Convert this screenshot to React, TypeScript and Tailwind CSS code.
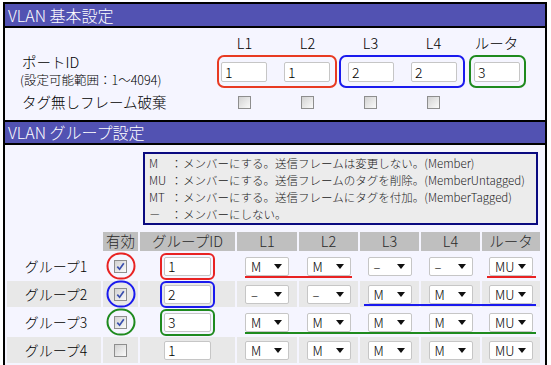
import React from "react";

const Check = ({ checked }: { checked?: boolean }) => (
  <div className="relative h-[13px] w-[13px] border border-[#8e8e8e] bg-[linear-gradient(135deg,#d2d2d2,#fafafa)]">
    {checked && (
      <svg className="absolute left-[1px] top-[1px]" width="9" height="9" viewBox="0 0 9 9">
        <path d="M1.3 4.6 L3.6 7.2 L7.8 1.2" stroke="#3a4fae" strokeWidth="1.7" fill="none" />
      </svg>
    )}
  </div>
);

const Inp = ({ v, w = 46, h = 20 }: { v: string; w?: number; h?: number }) => (
  <div
    className="flex items-center rounded-[2px] border border-[#c6c6c6] bg-white pl-[3px] text-[14px] leading-none text-black"
    style={{ width: w, height: h }}
  >
    {v}
  </div>
);

const Sel = ({ v }: { v: string }) => (
  <div className="flex h-[19px] w-[44px] items-center justify-between rounded-[2px] border border-[#c6c6c6] bg-white pl-[5px] pr-[6px] text-[13px] leading-none text-black">
    <span>{v}</span>
    <svg width="8" height="5" viewBox="0 0 8 5">
      <path d="M0 0h8L4 5z" fill="#111" />
    </svg>
  </div>
);

const legend: [string, string][] = [
  ["M", "メンバーにする。送信フレームは変更しない。(Member)"],
  ["MU", "メンバーにする。送信フレームのタグを削除。(MemberUntagged)"],
  ["MT", "メンバーにする。送信フレームにタグを付加。(MemberTagged)"],
  ["－", "メンバーにしない。"],
];

type Row = {
  label: string;
  checked: boolean;
  gid: string;
  vals: string[];
  color?: string;
  gray: boolean;
};

const rows: Row[] = [
  { label: "グループ1", checked: true, gid: "1", vals: ["M", "M", "–", "–", "MU"], color: "border-[#e82222]", gray: false },
  { label: "グループ2", checked: true, gid: "2", vals: ["–", "–", "M", "M", "MU"], color: "border-[#1a1aee]", gray: true },
  { label: "グループ3", checked: true, gid: "3", vals: ["M", "M", "M", "M", "MU"], color: "border-[#1e8a1e]", gray: false },
  { label: "グループ4", checked: false, gid: "1", vals: ["M", "M", "M", "M", "MU"], gray: true },
];

export default function App() {
  return (
    <div className="min-h-screen bg-white pl-[3px] pt-[2px] font-['Noto_Sans_CJK_JP','Noto_Sans',sans-serif] font-light text-black">
      <div className="w-[544px] border-x-2 border-t-2 border-black">
        {/* Section 1 title */}
        <div className="h-[24px] border-b-2 border-black bg-[#5252b2] pl-[3px] text-[16px] leading-[22px] text-white">
          VLAN 基本設定
        </div>
        {/* Section 1 content */}
        <div className="bg-[#f5f5ff] pb-[10px] pt-[7px]">
          <div className="flex h-[16px] items-center text-[14.5px] leading-none">
            <div className="w-[208px]" />
            {["L1", "L2", "L3", "L4", "ルータ"].map((h) => (
              <div key={h} className="w-[63px] text-center">
                {h}
              </div>
            ))}
          </div>
          <div className="mt-[4px] flex">
            <div className="w-[212px]">
              <div className="pl-[17px] text-[14.5px] leading-[13px]">ポートID</div>
              <div className="mt-[4px] pl-[15px] text-[12.5px] leading-[15px]">(設定可能範囲：1〜4094)</div>
            </div>
            <div className="flex h-[33px] w-[120px] items-center rounded-[7px] border-2 border-[#e83a22] pl-[2px]">
              <Inp v="1" />
              <div className="ml-[17px]">
                <Inp v="1" />
              </div>
            </div>
            <div className="ml-[2px] flex h-[33px] w-[126px] items-center rounded-[7px] border-2 border-[#1a1aee] pl-[7px]">
              <Inp v="2" />
              <div className="ml-[17px]">
                <Inp v="2" />
              </div>
            </div>
            <div className="ml-[4px] flex h-[33px] w-[57px] items-center rounded-[7px] border-2 border-[#1e8a1e] pl-[3px]">
              <Inp v="3" />
            </div>
          </div>
          <div className="mt-[6px] flex h-[16px] items-center">
            <div className="w-[208px] pl-[17px] text-[14.5px] leading-none">タグ無しフレーム破棄</div>
            {[0, 1, 2, 3].map((i) => (
              <div key={i} className="flex w-[63px] justify-center">
                <Check />
              </div>
            ))}
          </div>
        </div>

        {/* Section 2 title */}
        <div className="h-[25px] border-y-2 border-black bg-[#5252b2] pl-[3px] text-[16px] leading-[21px] text-white">
          VLAN グループ設定
        </div>
        {/* Section 2 content */}
        <div className="bg-[#f5f5ff] px-[2px] pb-[20px] pt-[7px]">
          <div className="ml-[136px] w-[395px] border-2 border-[#0a0a80] bg-[#ececec] px-[4px] pt-[1px] text-[11.5px] leading-[17px] text-[#222]">
            {legend.map(([c, t]) => (
              <div key={c} className="flex whitespace-nowrap">
                <span className="w-[21px]">{c}</span>
                <span className="w-[13px] text-center">：</span>
                <span>{t}</span>
              </div>
            ))}
          </div>

          <div className="relative mt-[7px] grid grid-cols-[94px_35px_95px_60px_59px_59px_59px_58px] grid-rows-[19px_26px_26px_26px_26px] gap-[2px] text-[14px]">
            <div />
            {["有効", "グループID", "L1", "L2", "L3", "L4", "ルータ"].map((h) => (
              <div key={h} className="flex items-center justify-center bg-[#bfbfbf] text-[14.5px] leading-none text-[#2a2a2a]">
                {h}
              </div>
            ))}
            {rows.map((r) => {
              const bg = r.gray ? "bg-[#e8e8e8]" : "";
              return (
                <React.Fragment key={r.label}>
                  <div className={`flex items-center justify-center pl-[4px] leading-none ${bg}`}>{r.label}</div>
                  <div className={`flex items-center justify-center ${bg}`}>
                    <div className="relative">
                      <Check checked={r.checked} />
                      {r.color && (
                        <span className={`absolute left-1/2 top-1/2 h-[27px] w-[29px] -translate-x-1/2 -translate-y-1/2 rounded-full border-2 ${r.color}`} />
                      )}
                    </div>
                  </div>
                  <div className={`flex items-center justify-center ${bg}`}>
                    <div className="relative">
                      <Inp v={r.gid} w={47} h={19} />
                      {r.color && <span className={`absolute -inset-1 rounded-[6px] border-2 ${r.color}`} />}
                    </div>
                  </div>
                  {r.vals.map((v, i) => (
                    <div key={i} className={`flex items-center justify-center ${bg}`}>
                      <Sel v={v} />
                    </div>
                  ))}
                </React.Fragment>
              );
            })}
            {/* annotation underlines */}
            <span className="absolute left-[238px] top-[44px] h-[2px] w-[107px] bg-[#e82222]" />
            <span className="absolute left-[480px] top-[44px] h-[2px] w-[49px] bg-[#e82222]" />
            <span className="absolute left-[357px] top-[72px] h-[2px] w-[172px] bg-[#1a1aee]" />
            <span className="absolute left-[238px] top-[100px] h-[2px] w-[291px] bg-[#1e8a1e]" />
          </div>
        </div>
      </div>
    </div>
  );
}
